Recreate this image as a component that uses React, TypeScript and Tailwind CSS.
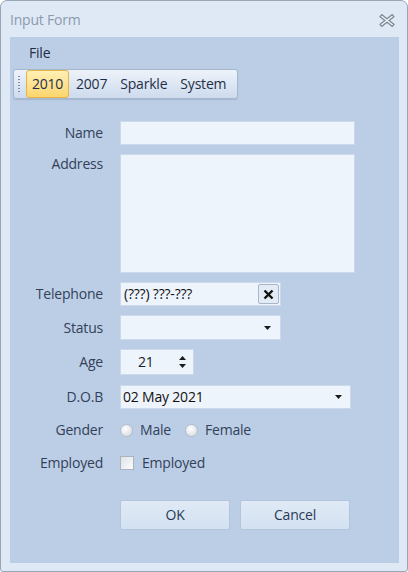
import React from 'react';

const font = { fontFamily: '"Open Sans", "Noto Sans", sans-serif' };

function Label({ children, top }: { children: string; top?: boolean }) {
  return (
    <div className={`w-[93px] shrink-0 text-right text-[#32415a] ${top ? 'pt-[3px]' : ''}`}>{children}</div>
  );
}

function Field({ className = '', children }: { className?: string; children?: React.ReactNode }) {
  return (
    <div className={`flex items-center bg-[#eef4fc] border border-[#cbd9eb] ${className}`}>{children}</div>
  );
}

function Caret() {
  return (
    <svg width="7" height="4" viewBox="0 0 7 4">
      <path d="M0 0h7L3.5 4z" fill="#1b1b1b" />
    </svg>
  );
}

function Radio({ label }: { label: string }) {
  return (
    <div className="flex items-center gap-[7px]">
      <span className="w-[13px] h-[13px] rounded-full border border-[#b4bcc6] bg-[radial-gradient(circle_at_40%_35%,#ffffff,#dde2e8_70%)]" />
      <span className="text-[#32415a]">{label}</span>
    </div>
  );
}

export default function App() {
  return (
    <div className="w-[408px] h-[572px] bg-white text-[14px] leading-none tracking-[-0.2px]" style={font}>
      <div className="w-full h-full flex flex-col rounded-t-[7px] rounded-b-[3px] border border-[#9aa6b6] bg-[#dfe9f5]">
        {/* caption */}
        <div className="h-[36px] flex items-center justify-between pl-[9px] pr-[12px] pt-[2px]">
          <span className="text-[14px] text-[#8a9ab0]">Input Form</span>
          <svg width="16" height="13" viewBox="0 0 16 13">
            <path d="M3 2.5 L13 10.5 M13 2.5 L3 10.5" stroke="#7b8696" strokeWidth="4" strokeLinecap="square" />
            <path d="M3 2.5 L13 10.5 M13 2.5 L3 10.5" stroke="#eef2f7" strokeWidth="1.6" strokeLinecap="square" />
          </svg>
        </div>

        <div className="flex-1 mx-[9px] mb-[8px] mr-[8px] bg-[#bccee5] flex flex-col">
          {/* menu */}
          <div className="h-[28px] flex items-center pl-[19px] pt-[4px] text-[#1e2d46]">File</div>

          {/* theme toolbar */}
          <div className="self-start ml-[3px] mt-[4px] h-[30px] flex items-center rounded-[3px] border border-[#a6b8d0] bg-gradient-to-b from-[#eef3fa] to-[#cddbed] pl-[4px] pr-[11px] shadow-[0_1px_1px_rgba(90,110,140,0.25)]">
            <div className="w-[2px] h-[18px] mr-[6px] bg-[radial-gradient(circle,#7f8ea4_45%,transparent_50%)] bg-[length:2px_3px]" />
            <div className="h-[28px] w-[43px] flex items-center justify-center rounded-[3px] border border-[#e5b44a] bg-gradient-to-b from-[#fff0b4] to-[#fbd56c] text-[#1f2f4a]">2010</div>
            <div className="flex gap-[13px] ml-[7px] text-[#1f2f4a]">
              <span>2007</span>
              <span>Sparkle</span>
              <span>System</span>
            </div>
          </div>

          {/* form */}
          <div className="mt-[22px] flex flex-col">
            <div className="flex items-center gap-[17px] h-[24px]">
              <Label>Name</Label>
              <Field className="w-[235px] h-[24px]" />
            </div>
            <div className="flex items-start gap-[17px] mt-[9px]">
              <Label top>Address</Label>
              <Field className="w-[235px] h-[119px]" />
            </div>
            <div className="flex items-center gap-[17px] mt-[9px]">
              <Label>Telephone</Label>
              <Field className="w-[161px] h-[24px] pl-[3px] pr-[1px] justify-between">
                <span className="text-[#111]">(???) ???-???</span>
                <span className="w-[21px] h-[20px] flex items-center justify-center border border-[#a7b6cb] rounded-[2px] bg-[#e3ebf5]">
                  <svg width="11" height="11" viewBox="0 0 11 11">
                    <path d="M1.5 1.5 L9.5 9.5 M9.5 1.5 L1.5 9.5" stroke="#111" strokeWidth="2.4" />
                  </svg>
                </span>
              </Field>
            </div>
            <div className="flex items-center gap-[17px] mt-[9px]">
              <Label>Status</Label>
              <Field className="w-[161px] h-[25px] justify-end pr-[9px]">
                <Caret />
              </Field>
            </div>
            <div className="flex items-center gap-[17px] mt-[9px]">
              <Label>Age</Label>
              <Field className="w-[74px] h-[26px] pl-[17px] pr-[7px] justify-between">
                <span className="text-[#1b1b1b]">21</span>
                <svg width="7" height="12" viewBox="0 0 7 12">
                  <path d="M0 4h7L3.5 0z M0 8h7L3.5 12z" fill="#1b1b1b" />
                </svg>
              </Field>
            </div>
            <div className="flex items-center gap-[17px] mt-[10px]">
              <Label>D.O.B</Label>
              <Field className="w-[231px] h-[24px] pl-[2px] pr-[8px] justify-between">
                <span className="text-[#111]">02 May 2021</span>
                <Caret />
              </Field>
            </div>
            <div className="flex items-center gap-[17px] mt-[9px] h-[24px]">
              <Label>Gender</Label>
              <div className="flex items-center gap-[14px]">
                <Radio label="Male" />
                <Radio label="Female" />
              </div>
            </div>
            <div className="flex items-center gap-[17px] mt-[9px] h-[24px]">
              <Label>Employed</Label>
              <div className="flex items-center gap-[8px]">
                <span className="w-[14px] h-[14px] border border-[#aab3bf] bg-gradient-to-br from-[#dfe3e8] to-[#fbfcfd]" />
                <span className="text-[#32415a]">Employed</span>
              </div>
            </div>

            <div className="flex gap-[10px] ml-[110px] mt-[25px]">
              <button className="w-[110px] h-[30px] rounded-[2px] border border-[#b3c5dc] bg-gradient-to-b from-[#e0eaf6] to-[#d3e1f1] text-[#2a3a55]">OK</button>
              <button className="w-[110px] h-[30px] rounded-[2px] border border-[#b3c5dc] bg-gradient-to-b from-[#e0eaf6] to-[#d3e1f1] text-[#2a3a55]">Cancel</button>
            </div>
          </div>
        </div>
      </div>
    </div>
  );
}
